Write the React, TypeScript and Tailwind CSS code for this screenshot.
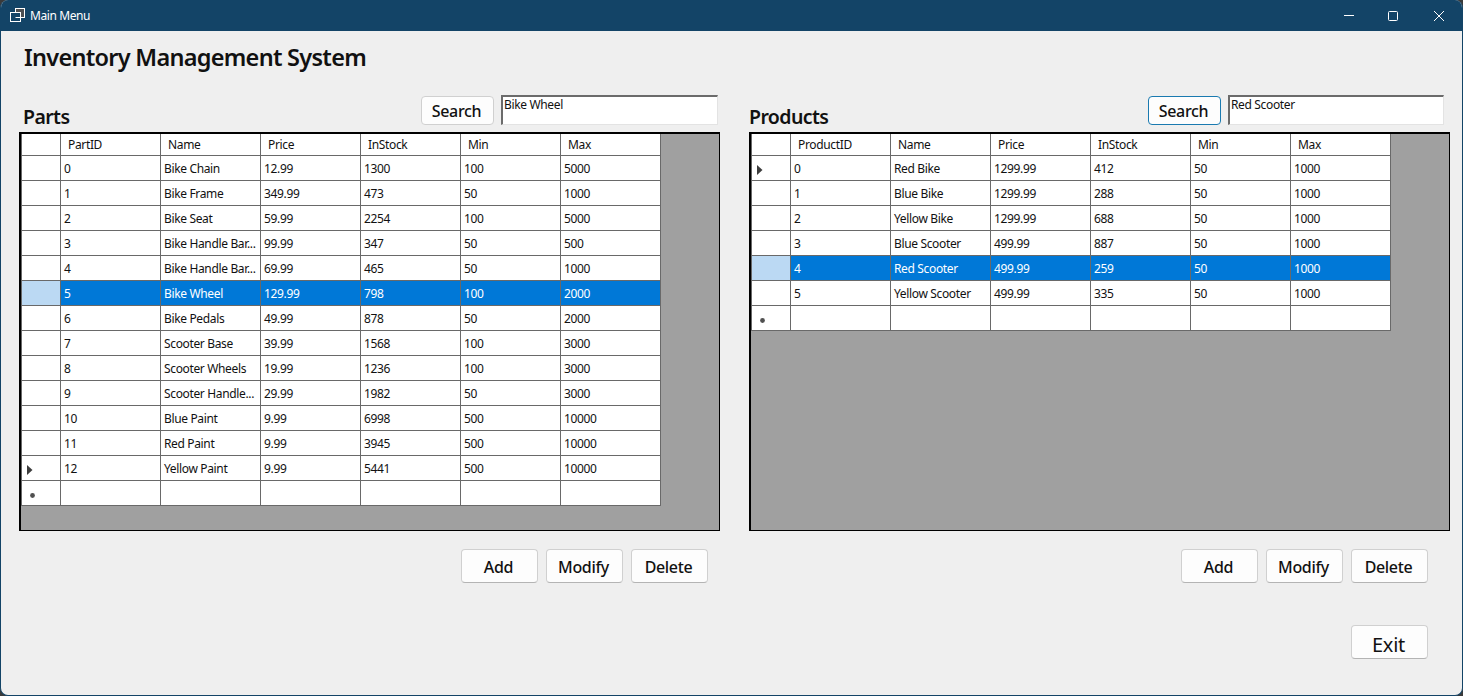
const FONT = "font-['Noto_Sans','Open_Sans',sans-serif]";

type Row = string[];
const partRows: Row[] = [
  ["0", "Bike Chain", "12.99", "1300", "100", "5000"],
  ["1", "Bike Frame", "349.99", "473", "50", "1000"],
  ["2", "Bike Seat", "59.99", "2254", "100", "5000"],
  ["3", "Bike Handle Bar...", "99.99", "347", "50", "500"],
  ["4", "Bike Handle Bar...", "69.99", "465", "50", "1000"],
  ["5", "Bike Wheel", "129.99", "798", "100", "2000"],
  ["6", "Bike Pedals", "49.99", "878", "50", "2000"],
  ["7", "Scooter Base", "39.99", "1568", "100", "3000"],
  ["8", "Scooter Wheels", "19.99", "1236", "100", "3000"],
  ["9", "Scooter Handle...", "29.99", "1982", "50", "3000"],
  ["10", "Blue Paint", "9.99", "6998", "500", "10000"],
  ["11", "Red Paint", "9.99", "3945", "500", "10000"],
  ["12", "Yellow Paint", "9.99", "5441", "500", "10000"],
];
const productRows: Row[] = [
  ["0", "Red Bike", "1299.99", "412", "50", "1000"],
  ["1", "Blue Bike", "1299.99", "288", "50", "1000"],
  ["2", "Yellow Bike", "1299.99", "688", "50", "1000"],
  ["3", "Blue Scooter", "499.99", "887", "50", "1000"],
  ["4", "Red Scooter", "499.99", "259", "50", "1000"],
  ["5", "Yellow Scooter", "499.99", "335", "50", "1000"],
];

function Arrow() {
  return (
    <svg width="6" height="10" viewBox="0 0 6 10" className="block ml-[5px] mt-[3px]">
      <path d="M0 0 L5.5 5 L0 10 Z" fill="#3c3c3c" />
    </svg>
  );
}
function Star() {
  return (
    <svg width="7" height="7" viewBox="0 0 7 7" className="block ml-[7px] mt-[4px]">
      <circle cx="3.5" cy="3.5" r="2.4" fill="#505050" />
    </svg>
  );
}

function HeaderCell({ label }: { label: string }) {
  return (
    <div className="w-[100px] h-full shrink-0 border-r border-[#696969] pl-[7px] flex items-center text-[12px] text-[#111111] leading-none tracking-[-0.35px]">
      {label}
    </div>
  );
}

function DataRow({ row, selected, marker }: { row: Row; selected?: boolean; marker?: "arrow" | "star" }) {
  return (
    <div className="flex h-[25px] border-b border-[#696969]">
      <div
        className={`w-[39px] shrink-0 border-r border-[#696969] flex items-center ${
          selected ? "bg-[#bbd9f3]" : "bg-white"
        }`}
      >
        {marker === "arrow" ? <Arrow /> : marker === "star" ? <Star /> : null}
      </div>
      {row.map((c, i) => (
        <div
          key={i}
          className={`w-[100px] shrink-0 border-r border-[#696969] pl-[3px] pt-[2px] flex items-center text-[12px] leading-none whitespace-nowrap overflow-hidden tracking-[-0.35px] ${
            selected ? "bg-[#0078d7] text-white" : "bg-white text-[#111111]"
          }`}
        >
          {c}
        </div>
      ))}
    </div>
  );
}

function Grid({
  first,
  rows,
  selected,
  current,
}: {
  first: string;
  rows: Row[];
  selected: number;
  current: number;
}) {
  const cols = [first, "Name", "Price", "InStock", "Min", "Max"];
  return (
    <div className="w-[701px] h-[399px] bg-[#a0a0a0] border border-black border-t-2 border-l-2">
      <div className="w-[640px] border-l border-[#696969]">
        <div className="flex h-[22px] bg-white border-b border-[#696969]">
          <div className="w-[39px] shrink-0 border-r border-[#696969]" />
          {cols.map((c) => (
            <HeaderCell key={c} label={c} />
          ))}
        </div>
        {rows.map((r, i) => (
          <DataRow key={i} row={r} selected={i === selected} marker={i === current ? "arrow" : undefined} />
        ))}
        <DataRow row={["", "", "", "", "", ""]} marker="star" />
      </div>
    </div>
  );
}

function Btn({ label }: { label: string }) {
  return (
    <button className="w-[77px] h-[34px] rounded-[4px] bg-[#fdfdfd] border border-[#d0d0d0] border-b-[#b4b4b4] pr-[2px] pt-[2px] text-[16px] font-medium text-[#111111] flex items-center justify-center tracking-[-0.35px]">
      {label}
    </button>
  );
}

function Panel({
  title,
  search,
  first,
  rows,
  selected,
  current,
  focused,
  titleClass,
  inputClass,
  btnClass,
}: {
  title: string;
  search: string;
  first: string;
  rows: Row[];
  selected: number;
  current: number;
  focused?: boolean;
  titleClass: string;
  inputClass: string;
  btnClass: string;
}) {
  return (
    <div className="w-[701px] flex flex-col">
      <div className="flex items-end h-[38px] pb-[1px]">
        <div className={`text-[19.5px] font-semibold leading-none pb-[5px] text-[#111111] tracking-[-0.6px] ${titleClass}`}>{title}</div>
        <div className="flex-1" />
        <button
          className={`w-[73px] h-[29px] mb-[6px] rounded-[4px] bg-[#fdfdfd] border pr-[2px] text-[16px] font-medium text-[#111111] flex items-center justify-center tracking-[-0.35px] ${
            focused ? "border-[#1a7ab0]" : "border-[#d0d0d0]"
          }`}
        >
          Search
        </button>
        <div className={`h-[30px] ml-[7px] mb-[6px] bg-white border border-[#e3e3e3] border-t-2 border-l-2 border-t-[#6b6b6b] border-l-[#6b6b6b] pl-[1px] text-[12px] leading-[16px] text-[#111111] tracking-[-0.35px] ${inputClass}`}>
          {search}
        </div>
      </div>
      <Grid first={first} rows={rows} selected={selected} current={current} />
      <div className={`flex gap-[8px] mt-[18px] ${btnClass}`}>
        <Btn label="Add" />
        <Btn label="Modify" />
        <Btn label="Delete" />
      </div>
    </div>
  );
}

export default function App() {
  return (
    <div className={`w-[1463px] h-[696px] bg-[#3a3a3a] ${FONT}`}>
      <div className="w-full h-full rounded-[8px] overflow-hidden bg-[#efefef] border-x border-b border-[#134467] flex flex-col">
        <div className="h-[31px] shrink-0 bg-[#134467] flex items-center text-white -mx-px">
          <svg width="16" height="15" viewBox="0 0 16 15" className="ml-[10px]" fill="none" stroke="#ffffff" strokeWidth="1">
            <rect x="5.5" y="0.5" width="9" height="9" fill="#4d4f52" />
            <rect x="0.5" y="4.5" width="10" height="9" fill="#134467" />
            <path d="M5.5 9.5 H10.5" stroke="#ffffff" />
          </svg>
          <span className="ml-[4px] text-[12px] leading-none tracking-[-0.4px]">Main Menu</span>
          <div className="flex-1" />
          <svg width="12" height="12" viewBox="0 0 12 12" className="mr-[32px]" fill="none" stroke="#ffffff" strokeWidth="1">
            <path d="M1 5.5 H11" />
          </svg>
          <svg width="12" height="12" viewBox="0 0 12 12" className="mr-[34px]" fill="none" stroke="#ffffff" strokeWidth="1">
            <rect x="1.5" y="1.5" width="9" height="9" rx="1" />
          </svg>
          <svg width="12" height="12" viewBox="0 0 12 12" className="mr-[18px]" fill="none" stroke="#ffffff" strokeWidth="1">
            <path d="M1 1 L11 11 M11 1 L1 11" />
          </svg>
        </div>
        <div className="flex-1 flex flex-col pl-[18px]">
          <div className="h-[63px] shrink-0 pl-[5px] pt-[10px] text-[23.5px] font-semibold leading-[32px] text-[#111111] tracking-[-0.72px]">
            Inventory Management System
          </div>
          <div className="flex gap-[29px]">
            <Panel
              title="Parts"
              search="Bike Wheel"
              first="PartID"
              rows={partRows}
              selected={5}
              current={12}
              titleClass="ml-[4px]"
              inputClass="w-[217px] mr-[2px]"
              btnClass="ml-[442px]"
            />
            <Panel
              title="Products"
              search="Red Scooter"
              first="ProductID"
              rows={productRows}
              selected={4}
              current={0}
              focused
              titleClass="ml-[0px]"
              inputClass="w-[216px] mr-[6px]"
              btnClass="ml-[432px]"
            />
          </div>
          <div className="flex justify-end mt-[42px] pr-[34px]">
            <button className="w-[77px] h-[34px] rounded-[4px] bg-[#fdfdfd] border border-[#d0d0d0] border-b-[#b4b4b4] pr-[2px] pt-[6px] text-[20px] text-[#111111] flex items-center justify-center tracking-[-0.3px]">
              Exit
            </button>
          </div>
        </div>
      </div>
    </div>
  );
}
